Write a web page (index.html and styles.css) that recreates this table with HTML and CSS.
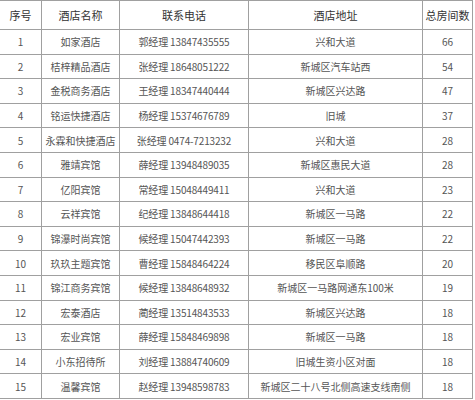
FILE: index.html
```html
<!DOCTYPE html>
<html lang="zh">
<head>
<meta charset="utf-8">
<link rel="stylesheet" href="styles.css">
</head>
<body>
<table class="hotels">
  <colgroup>
    <col class="c-no"><col class="c-name"><col class="c-phone"><col class="c-addr"><col class="c-rooms">
  </colgroup>
  <thead>
    <tr><th>序号</th><th>酒店名称</th><th>联系电话</th><th>酒店地址</th><th>总房间数</th></tr>
  </thead>
  <tbody>
    <tr><td>1</td><td>如家酒店</td><td>郭经理 13847435555</td><td>兴和大道</td><td>66</td></tr>
    <tr><td>2</td><td>桔梓精品酒店</td><td>张经理 18648051222</td><td>新城区汽车站西</td><td>54</td></tr>
    <tr><td>3</td><td>金税商务酒店</td><td>王经理 18347440444</td><td>新城区兴达路</td><td>47</td></tr>
    <tr><td>4</td><td>铭运快捷酒店</td><td>杨经理 15374676789</td><td>旧城</td><td>37</td></tr>
    <tr><td>5</td><td>永霖和快捷酒店</td><td>张经理 0474-7213232</td><td>兴和大道</td><td>28</td></tr>
    <tr><td>6</td><td>雅靖宾馆</td><td>薛经理 13948489035</td><td>新城区惠民大道</td><td>28</td></tr>
    <tr><td>7</td><td>亿阳宾馆</td><td>常经理 15048449411</td><td>兴和大道</td><td>23</td></tr>
    <tr><td>8</td><td>云祥宾馆</td><td>纪经理 13848644418</td><td>新城区一马路</td><td>22</td></tr>
    <tr><td>9</td><td>锦瀑时尚宾馆</td><td>候经理 15047442393</td><td>新城区一马路</td><td>22</td></tr>
    <tr><td>10</td><td>玖玖主题宾馆</td><td>曹经理 15848464224</td><td>移民区阜顺路</td><td>20</td></tr>
    <tr><td>11</td><td>锦江商务宾馆</td><td>候经理 13848648932</td><td>新城区一马路网通东100米</td><td>19</td></tr>
    <tr><td>12</td><td>宏泰酒店</td><td>蔺经理 13514843533</td><td>新城区兴达路</td><td>18</td></tr>
    <tr><td>13</td><td>宏业宾馆</td><td>薛经理 15848469898</td><td>新城区一马路</td><td>18</td></tr>
    <tr><td>14</td><td>小东招待所</td><td>刘经理 13884740609</td><td>旧城生资小区对面</td><td>18</td></tr>
    <tr><td>15</td><td>温馨宾馆</td><td>赵经理 13948598783</td><td>新城区二十八号北侧高速支线南侧</td><td>18</td></tr>
  </tbody>
</table>
</body>
</html>
```

FILE: styles.css
```css
html, body {
  margin: 0;
  padding: 0;
  background: #ffffff;
}

.hotels {
  border-collapse: collapse;
  table-layout: fixed;
  width: 473px;
  margin: 0 0 0 -1px;
  font-family: "Noto Sans CJK SC", "Noto Sans", sans-serif;
  color: #555555;
  font-size: 10px;
}

.c-no { width: 42px; }
.c-name { width: 78px; }
.c-phone { width: 129px; }
.c-addr { width: 174px; }
.c-rooms { width: 50px; }

.hotels th,
.hotels td {
  border: 1px solid #a0a0a0;
  text-align: center;
  vertical-align: middle;
  padding: 0;
  white-space: nowrap;
  overflow: hidden;
}

.hotels th {
  height: 28px;
  font-weight: normal;
  font-size: 11px;
  color: #333333;
}

.hotels td {
  height: 23.6px;
}

.hotels td:nth-child(3) {
  letter-spacing: -0.15px;
}
```
